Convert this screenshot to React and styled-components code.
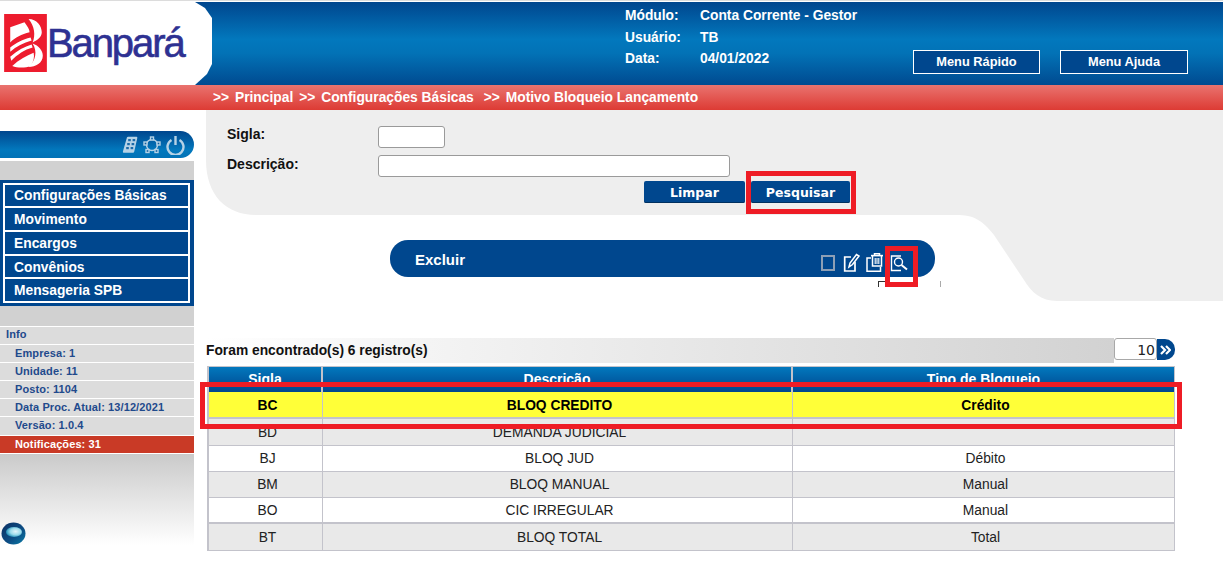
import React from "react";
import styled, { createGlobalStyle } from "styled-components";

const Global = createGlobalStyle`
  html, body { margin: 0; padding: 0; background: #fff; }
  body { font-family: "Liberation Sans", Arial, sans-serif; }
  * { box-sizing: border-box; }
`;

const Page = styled.div`
  position: relative;
  width: 1223px;
  height: 578px;
  overflow: hidden;
  background: #fff;
  border-top: 1px solid #dcdcdc;
  padding-top: 1px;
`;

const Header = styled.header`
  display: flex;
  height: 83px;
  background: linear-gradient(#00468e 0%, #0278bd 45%, #0272b6 62%, #004a90 100%);
  color: #fff;
  font-weight: bold;
  font-size: 14px;
`;

const LogoArea = styled.div`
  display: flex;
  align-items: flex-start;
  width: 212px;
  height: 83px;
  padding: 12px 0 0 4px;
  background: #fff;
  clip-path: polygon(195px 0, 205px 6px, 212px 16px, 212px 62px, 207px 72px, 195px 83px, 0 83px, 0 0);
`;

const LogoWord = styled.span`
  margin: 7px 0 0 0;
  font-weight: normal;
  font-size: 40px;
  line-height: 44px;
  letter-spacing: -2.1px;
  color: #2e3192;
  -webkit-text-stroke: 0.6px #2e3192;
`;

const HeaderInfo = styled.div`
  display: grid;
  grid-template-columns: 75px auto;
  grid-auto-rows: 21.5px;
  align-items: center;
  margin-left: 413px;
  padding-top: 3px;
  font-size: 13.8px;
`;

const MenuButtons = styled.div`
  display: flex;
  gap: 20px;
  margin-left: auto;
  margin-right: 35px;
  padding-top: 48px;
`;

const MenuButton = styled.div`
  display: flex;
  align-items: center;
  justify-content: center;
  width: ${(p) => p.$w}px;
  height: 24px;
  padding-bottom: 2px;
  background: #00478e;
  border: 1px solid #fff;
  font-size: 12.8px;
`;

const Crumb = styled.nav`
  display: flex;
  gap: 6px;
  align-items: center;
  height: 25px;
  padding-left: 213px;
  background: linear-gradient(#e9736f, #dd3b34);
  color: #fff;
  font-weight: bold;
  font-size: 13.8px;
`;

const CrumbItem = styled.span`
  margin-left: ${(p) => p.$gap || 0}px;
`;

const Arrow = styled.span`
  margin-right: 2px;
`;

const Body = styled.div`
  display: flex;
  height: 468px;
`;

const Sidebar = styled.aside`
  display: flex;
  flex-direction: column;
  flex: 0 0 194px;
  padding-top: 21px;
`;

const Pill = styled.div`
  display: flex;
  align-items: center;
  justify-content: flex-end;
  gap: 5px;
  height: 27px;
  padding-right: 9px;
  background: linear-gradient(#00468e, #0278bd 70%, #0272b6);
  border-radius: 0 14px 14px 0;
`;

const GreyStrip = styled.div`
  height: ${(p) => p.$h}px;
  margin-top: ${(p) => p.$top || 0}px;
  background: #d1d1d1;
`;

const Nav = styled.ul`
  display: flex;
  flex-direction: column;
  margin: 0;
  padding: 3px 4px 3px 3px;
  list-style: none;
  background: #00478e;
`;

const NavItem = styled.li`
  height: ${(p) => p.$h}px;
  padding-left: 9px;
  border: 2px solid #fff;
  border-top-width: ${(p) => (p.$first ? 2 : 0)}px;
  line-height: ${(p) => (p.$first ? 21 : 24)}px;
  color: #fff;
  font-weight: bold;
  font-size: 13.8px;
`;

const Info = styled.ul`
  margin: 0;
  padding: 0;
  list-style: none;
`;

const InfoRow = styled.li`
  height: 18.2px;
  padding-left: ${(p) => (p.$head ? 6 : 15)}px;
  border-top: 1px solid #fff;
  background: ${(p) => (p.$alert ? "#c93a26" : "#dcdcdc")};
  color: ${(p) => (p.$alert ? "#fff" : "#1f4a8c")};
  font-weight: bold;
  font-size: 11px;
  line-height: ${(p) => (p.$head ? 15 : 17)}px;
  letter-spacing: 0.1px;
`;

const SideFoot = styled.div`
  display: flex;
  align-items: flex-end;
  height: 92px;
  padding-left: 1px;
  border-top: 1px solid #fff;
  background: linear-gradient(#cacaca, #fff);
`;

const Main = styled.main`
  position: relative;
  flex: 1;
`;

const PanelShape = styled.svg`
  position: absolute;
  left: 12px;
  top: 0;
  z-index: 0;
`;

const Content = styled.div`
  position: relative;
  z-index: 1;
  display: flex;
  flex-direction: column;
`;

const SearchForm = styled.form`
  display: grid;
  grid-template-columns: 151px auto;
  grid-auto-rows: min-content;
  row-gap: 7px;
  width: 656px;
  height: 105px;
  margin: 0;
  padding: 16px 0 0 33px;
`;

const Label = styled.label`
  margin-top: ${(p) => p.$top || 0}px;
  font-weight: bold;
  font-size: 14px;
  line-height: 18px;
  color: #111;
`;

const TextInput = styled.input`
  display: block;
  width: ${(p) => p.$w}px;
  height: 22px;
  padding: 0 4px;
  background: #fff;
  border: 1px solid #9a9a9a;
  border-radius: 3px;
`;

const FormActions = styled.div`
  grid-column: 1 / 3;
  display: flex;
  justify-content: flex-end;
  gap: 6px;
  margin-top: -3px;
`;

const Button = styled.button`
  width: ${(p) => p.$w}px;
  height: 22px;
  padding: 0;
  background: #00478e;
  border: none;
  border-radius: 2px;
  box-shadow: inset 0 -1px 0 #00305f;
  color: #fff;
  font-family: "DejaVu Sans", sans-serif;
  font-weight: bold;
  font-size: 12.5px;
`;

const ActionBar = styled.div`
  display: flex;
  justify-content: space-between;
  width: 545px;
  height: 37px;
  margin: 25px 0 0 196px;
  padding: 13px 27px 0 25px;
  background: #00478e;
  border-radius: 18px;
  color: #fff;
  font-weight: bold;
  font-size: 15px;
  line-height: 13px;
`;

const ActionIcons = styled.div`
  display: flex;
  gap: 6px;
  height: 20px;
`;

const CheckIcon = styled.span`
  display: block;
  width: 14px;
  height: 16px;
  margin: 2px 2px 0 0;
  border: 2px solid #8d9fb5;
`;

const ResultsHead = styled.div`
  display: flex;
  width: 969px;
  height: 25px;
  margin: 61px 0 0 12px;
`;

const ResultsTitle = styled.div`
  flex: 1;
  background: linear-gradient(to right, #fff, #d2d2d2);
  font-weight: bold;
  font-size: 13.8px;
  line-height: 26px;
  color: #111;
`;

const PageSize = styled.div`
  width: 43px;
  height: 22px;
  padding-right: 1px;
  background: #fff;
  border: 1px solid #a8a8a8;
  border-radius: 3px;
  text-align: right;
  font-family: "DejaVu Sans", sans-serif;
  font-size: 14px;
  line-height: 22px;
  color: #222;
`;

const NextButton = styled.div`
  display: flex;
  align-items: center;
  justify-content: center;
  width: 18px;
  height: 21px;
  margin-top: 1px;
  padding-right: 2px;
  background: #00478e;
  border-radius: 0 10px 10px 0;
`;

const Table = styled.div`
  width: 968px;
  margin: 3px 0 0 13px;
  border: 1px solid #c3c3cb;
  border-left-width: 2px;
`;

const Row = styled.div`
  display: grid;
  grid-template-columns: 114px 470px 1fr;
  height: ${(p) => p.$h}px;
  background: ${(p) => p.$bg};
  border-bottom: ${(p) => p.$line ?? 1}px solid #c3c3cb;
  color: ${(p) => p.$color || "#222"};
  font-weight: ${(p) => (p.$bold ? "bold" : "normal")};
  font-size: 13.8px;
  line-height: ${(p) => p.$lh}px;
`;

const HeadRow = styled(Row)`
  background: linear-gradient(#0278bd, #00468e);
  color: #fff;
  font-weight: bold;
  font-size: 14px;
`;

const Cell = styled.div`
  padding-left: 4px;
  text-align: center;
  border-right: 1px solid #c3c3cb;
  &:last-child { border-right: none; }
`;

const HeadCell = styled(Cell)`
  padding-left: 0;
  border-right-width: 2px;
`;

const Mark = styled.div`
  position: absolute;
  left: ${(p) => p.$x}px;
  top: ${(p) => p.$y}px;
  width: ${(p) => p.$w}px;
  height: ${(p) => p.$h}px;
  border: 5px solid #ee1c25;
  z-index: 5;
`;

const TooltipCorner = styled.div`
  position: absolute;
  left: ${(p) => p.$x}px;
  top: 280px;
  width: ${(p) => p.$w}px;
  height: 6px;
  border-top: ${(p) => (p.$dark ? "1px solid #333" : "none")};
  border-left: 1px solid ${(p) => (p.$dark ? "#333" : "#aaa")};
  z-index: 4;
`;

const LogoMark = () => (
  <svg width="43" height="58" viewBox="0 0 42 57">
    <rect width="42" height="57" fill="#ed1c2e" />
    <g fill="#fff">
      <path d="M24 5C32 5 37 12 37 18C37 23 32 26 28 28C31 21 30 12 24 5Z" />
      <path d="M28 29C34 31 38 36 38 41C38 48 31 52 24 52C31 46 33 37 28 29Z" />
      <path d="M6 13L20 8C23 12 25 15 25 18C17 20 11 23 6 28Z" />
      <path d="M6 33C12 28 18 25 26 23L27 26C19 28 12 32 6 37Z" />
      <path d="M6 42C13 36 20 32 27 30L28 33C20 35 13 40 7 46Z" />
      <path d="M8 51C14 45 22 41 29 38C30 42 29 47 26 51C21 53 13 53 8 51Z" />
    </g>
  </svg>
);

const Phone = () => (
  <svg width="16" height="18" viewBox="0 0 16 18">
    <path d="M5 1.2Q5.3 .8 6 .8H14.4Q15.6 .8 15.3 2L12.2 15.8Q12 16.8 11 16.8H1.8Q.6 16.8 .9 15.6Z" fill="#b5d2e6" />
    <g fill="#1a6aa8">
      <rect x="6.2" y="3" width="2.6" height="2.2" /><rect x="10.6" y="3" width="2.6" height="2.2" />
      <rect x="5.2" y="7" width="2.6" height="2.2" /><rect x="9.6" y="7" width="2.6" height="2.2" />
      <rect x="4.2" y="11" width="2.6" height="2.2" /><rect x="8.6" y="11" width="2.6" height="2.2" />
    </g>
  </svg>
);

const Gear = () => (
  <svg width="18" height="18" viewBox="0 0 18 18" fill="none" stroke="#b5d2e6" strokeWidth="1.4">
    <circle cx="9" cy="9" r="5.5" />
    <g fill="#0f5f9f">
      <rect x="7.5" y="1" width="3" height="3" /><rect x="14" y="6" width="3" height="3" />
      <rect x="12" y="13.5" width="3" height="3" /><rect x="3" y="13.5" width="3" height="3" />
      <rect x="1" y="6" width="3" height="3" />
    </g>
  </svg>
);

const Power = () => (
  <svg width="19" height="20" viewBox="0 0 19 20" fill="none" stroke="#b5d2e6" strokeWidth="2.4">
    <path d="M5.5 5A8 8 0 1 0 13.5 5" />
    <path d="M9.5 1V10" />
  </svg>
);

const EditIcon = () => (
  <svg width="17" height="19" viewBox="0 0 17 19" fill="none" stroke="#fff" strokeWidth="1.7">
    <path d="M8 4H1.7V18H12V9" />
    <path d="M6 14L7 10L13.5 1.5L16 3L9.5 11.5Z" fill="#00478e" strokeWidth="1.5" />
  </svg>
);

const TrashIcon = () => (
  <svg width="17" height="19" viewBox="0 0 17 19" fill="none" stroke="#fff" strokeWidth="1.5">
    <path d="M5 5H1V18.2H14.5V14" />
    <path d="M5 2.6H17" strokeWidth="1.6" />
    <path d="M8.5 2.5V.8H13.5V2.5" />
    <path d="M6.5 3V13H15.5V3" />
    <path d="M9.2 5V11M11 5V11M12.8 5V11" strokeWidth="1.1" />
  </svg>
);

const SearchIcon = () => (
  <svg width="19" height="19" viewBox="-1 0 19 19" fill="none" stroke="#fff" strokeWidth="1.4">
    <path d="M11 3H1.5V17.5H11" />
    <circle cx="8.5" cy="9" r="4" />
    <path d="M11.5 12L17 16.5" strokeWidth="2" />
  </svg>
);

const Chevrons = () => (
  <svg width="11" height="10" viewBox="0 0 11 10" fill="none" stroke="#fff" strokeWidth="2.2">
    <path d="M1 1L5 5L1 9" />
    <path d="M6 1L10 5L6 9" />
  </svg>
);

const Orb = () => (
  <svg width="25" height="23" viewBox="0 0 25 23">
    <defs>
      <linearGradient id="orbRing" x1="0" y1="0" x2="1" y2="1">
        <stop offset="0%" stopColor="#0a2f62" />
        <stop offset="60%" stopColor="#0d4f86" />
        <stop offset="100%" stopColor="#0a7ea8" />
      </linearGradient>
      <radialGradient id="orbCore" cx="60%" cy="45%" r="60%">
        <stop offset="0%" stopColor="#e4f6fb" />
        <stop offset="55%" stopColor="#9bdcec" />
        <stop offset="100%" stopColor="#1f8fb8" />
      </radialGradient>
    </defs>
    <ellipse cx="12.5" cy="11.5" rx="12" ry="11" fill="url(#orbRing)" />
    <ellipse cx="13" cy="10" rx="8" ry="5" fill="url(#orbCore)" />
  </svg>
);

const rows = [
  { s: "BD", d: "DEMANDA JUDICIAL", t: "", bg: "#e9e9e9", h: 27, lh: 28 },
  { s: "BJ", d: "BLOQ JUD", t: "Débito", bg: "#fff", h: 26, lh: 25 },
  { s: "BM", d: "BLOQ MANUAL", t: "Manual", bg: "#e9e9e9", h: 26, lh: 25 },
  { s: "BO", d: "CIC IRREGULAR", t: "Manual", bg: "#fff", h: 26, lh: 25, line: 2 },
  { s: "BT", d: "BLOQ TOTAL", t: "Total", bg: "#e9e9e9", h: 26, lh: 27, line: 0 },
];

const info = ["Empresa: 1", "Unidade: 11", "Posto: 1104", "Data Proc. Atual: 13/12/2021", "Versão: 1.0.4"];
const nav = [["Configurações Básicas", 25], ["Movimento", 24], ["Encargos", 24], ["Convênios", 23], ["Mensageria SPB", 24]];

export default function App() {
  return (
    <Page>
      <Global />
      <Header>
        <LogoArea>
          <LogoMark />
          <LogoWord>Banpará</LogoWord>
        </LogoArea>
        <HeaderInfo>
          <span>Módulo:</span><span>Conta Corrente - Gestor</span>
          <span>Usuário:</span><span>TB</span>
          <span>Data:</span><span>04/01/2022</span>
        </HeaderInfo>
        <MenuButtons>
          <MenuButton $w={127}>Menu Rápido</MenuButton>
          <MenuButton $w={128}>Menu Ajuda</MenuButton>
        </MenuButtons>
      </Header>
      <Crumb>
        <CrumbItem><Arrow>&gt;&gt;</Arrow> Principal</CrumbItem>
        <CrumbItem><Arrow>&gt;&gt;</Arrow> Configurações Básicas</CrumbItem>
        <CrumbItem $gap={4}><Arrow>&gt;&gt;</Arrow> Motivo Bloqueio Lançamento</CrumbItem>
      </Crumb>
      <Body>
        <Sidebar>
          <Pill><Phone /><Gear /><Power /></Pill>
          <GreyStrip $h={19} $top={3} />
          <Nav>
            {nav.map(([label, h], i) => (
              <NavItem key={label} $h={h} $first={i === 0}>{label}</NavItem>
            ))}
          </Nav>
          <GreyStrip $h={19.5} />
          <Info>
            <InfoRow $head>Info</InfoRow>
            {info.map((t) => <InfoRow key={t}>{t}</InfoRow>)}
            <InfoRow $alert>Notificações: 31</InfoRow>
          </Info>
          <SideFoot><Orb /></SideFoot>
        </Sidebar>
        <Main>
          <PanelShape width="1017" height="191" viewBox="0 0 1017 191">
            <path
              d="M0 0H1017V191H851C835 191 825 182 818 170L788 125C776 110 768 105 750 105H50C20 105 0 85 0 50Z"
              fill="#eeeeee"
            />
          </PanelShape>
          <Content>
            <SearchForm>
              <Label $top={-1}>Sigla:</Label>
              <TextInput $w={67} />
              <Label>Descrição:</Label>
              <TextInput $w={352} />
              <FormActions>
                <Button type="button" $w={101}>Limpar</Button>
                <Button type="button" $w={99}>Pesquisar</Button>
              </FormActions>
            </SearchForm>
            <ActionBar>
              <span>Excluir</span>
              <ActionIcons>
                <CheckIcon />
                <EditIcon />
                <TrashIcon />
                <SearchIcon />
              </ActionIcons>
            </ActionBar>
            <ResultsHead>
              <ResultsTitle>Foram encontrado(s) 6 registro(s)</ResultsTitle>
              <PageSize>10</PageSize>
              <NextButton><Chevrons /></NextButton>
            </ResultsHead>
            <Table>
              <HeadRow $h={25} $lh={25} $line={0}>
                <HeadCell>Sigla</HeadCell><HeadCell>Descrição</HeadCell><HeadCell>Tipo de Bloqueio</HeadCell>
              </HeadRow>
              <Row $h={27} $lh={28} $line={2} $bg="#ffff38" $bold $color="#000">
                <Cell>BC</Cell><Cell>BLOQ CREDITO</Cell><Cell>Crédito</Cell>
              </Row>
              {rows.map((r) => (
                <Row key={r.s} $h={r.h} $lh={r.lh} $bg={r.bg} $line={r.line}>
                  <Cell>{r.s}</Cell><Cell>{r.d}</Cell><Cell>{r.t}</Cell>
                </Row>
              ))}
            </Table>
          </Content>
        </Main>
      </Body>
      <Mark $x={746} $y={170} $w={110} $h={43} />
      <Mark $x={885} $y={245} $w={33} $h={41} />
      <Mark $x={200} $y={381} $w={982} $h={47} />
      <TooltipCorner $x={878} $w={7} $dark />
      <TooltipCorner $x={940} $w={1} />
    </Page>
  );
}
